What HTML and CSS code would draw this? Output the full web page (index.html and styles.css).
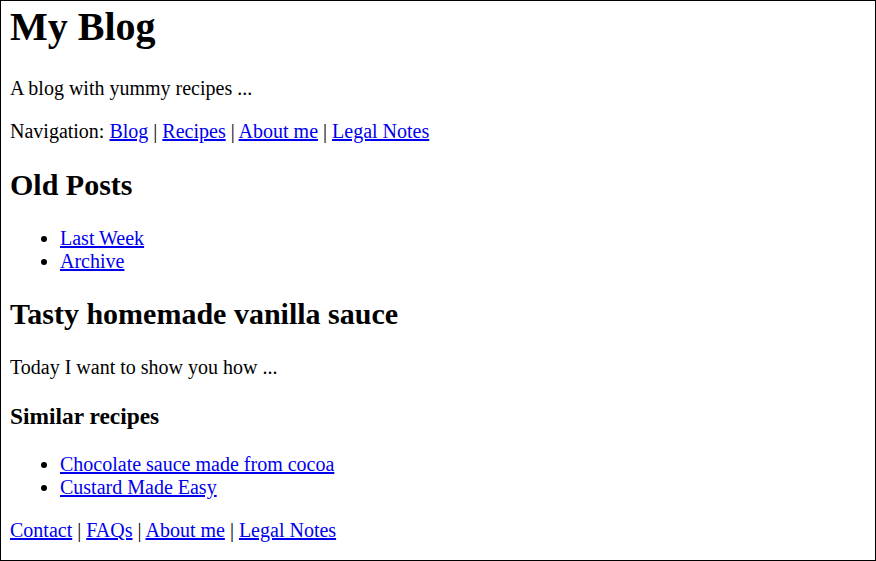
FILE: index.html
```html
<!DOCTYPE html>
<html lang="en">
<head>
<meta charset="utf-8">
<title>My Blog</title>
<link rel="stylesheet" href="styles.css">
</head>
<body>
<div class="page">
  <header class="site-header">
    <h1 class="site-title">My Blog</h1>
    <p>A blog with yummy recipes ...</p>
    <p class="nav">Navigation: <a href="#">Blog</a> | <a href="#">Recipes</a> | <a href="#">About me</a> | <a href="#">Legal Notes</a></p>
  </header>
  <aside>
    <h2>Old Posts</h2>
    <ul>
      <li><a href="#">Last Week</a></li>
      <li><a href="#">Archive</a></li>
    </ul>
  </aside>
  <article>
    <h2>Tasty homemade vanilla sauce</h2>
    <p>Today I want to show you how ...</p>
    <h3>Similar recipes</h3>
    <ul>
      <li><a href="#">Chocolate sauce made from cocoa</a></li>
      <li><a href="#">Custard Made Easy</a></li>
    </ul>
  </article>
  <footer>
    <p class="footer-links"><a href="#">Contact</a> | <a href="#">FAQs</a> | <a href="#">About me</a> | <a href="#">Legal Notes</a></p>
  </footer>
</div>
</body>
</html>
```

FILE: styles.css
```css
html, body {
  margin: 0;
  padding: 0;
  background: #fff;
}
.page {
  box-sizing: border-box;
  width: 876px;
  height: 561px;
  border: 1px solid #000;
  padding: 0 9px;
  overflow: hidden;
  font-family: "Liberation Serif", "Times New Roman", serif;
  font-size: 20px;
  color: #000;
}
h1 {
  font-size: 40px;
  margin: 0.67em 0;
}
.site-title {
  margin-top: 2px;
}
h2 {
  font-size: 30px;
  margin: 0.83em 0;
}
h3 {
  font-size: 23.4px;
  margin: 1em 0;
}
p {
  margin: 1em 0;
}
ul {
  margin: 1em 0;
  padding-left: 50px;
}
a {
  color: #0000ee;
}
```
